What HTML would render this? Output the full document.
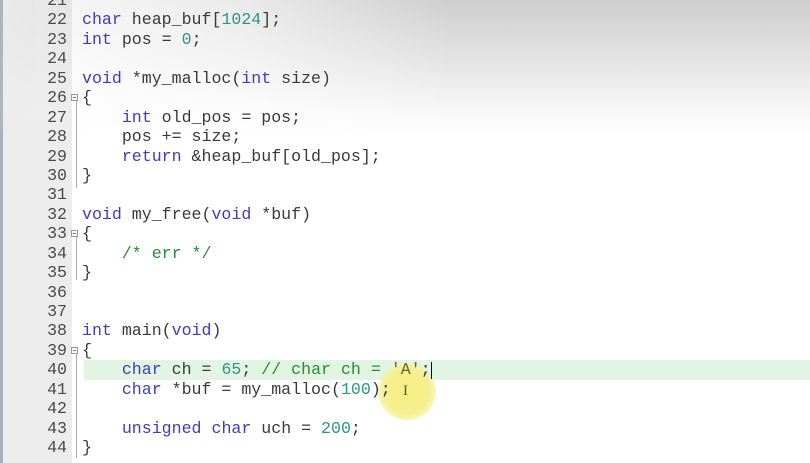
<!DOCTYPE html>
<html><head><meta charset="utf-8"><style>
html,body{margin:0;padding:0;width:810px;height:463px;overflow:hidden;background:#fff;}
.shade{position:absolute;left:0;top:0;width:810px;height:140px;background:linear-gradient(to bottom,#cecece 0%,#e2e2e2 40%,#f8f8f8 80%,rgba(255,255,255,0) 100%);-webkit-mask-image:linear-gradient(to right,rgba(0,0,0,0.1) 0px,rgba(0,0,0,0.45) 250px,#000 450px);mask-image:linear-gradient(to right,rgba(0,0,0,0.1) 0px,rgba(0,0,0,0.45) 250px,#000 450px);}
.strip{position:absolute;left:0;top:0;width:3px;height:463px;background:#a8b0bc;}
.gut{position:absolute;left:3px;top:0;width:69px;height:463px;background:#ececec;}
.hl{position:absolute;left:84px;top:360px;width:726px;height:20px;background:#e2f5e2;}
.code{position:absolute;left:0;top:-9px;font-family:"Liberation Mono",monospace;font-size:16.6px;line-height:19.45px;color:#3a3a3a;}
.l{position:relative;height:19.45px;white-space:pre;}
.n{position:absolute;left:0;width:67px;text-align:right;color:#4a4a4a;}
.t{position:absolute;left:82px;}
.k{color:#3c3cc4}.d{color:#2e9488}.c{color:#2a8a3a}.s{color:#6a6a1a}
.fb{position:absolute;left:71px;width:7px;height:7px;border:1px solid #999;box-sizing:border-box;background:#fff;}
.fb:after{content:"";position:absolute;left:1px;top:2px;width:3px;height:1px;background:#777;}
.vl{position:absolute;left:76px;width:1px;background:#aaa;}
.cur{position:absolute;left:431px;top:362px;width:1px;height:17px;background:#000;}
.glow{position:absolute;left:378px;top:364px;width:58px;height:56px;border-radius:50%;background:radial-gradient(circle,#f6ee80 0%,#f6ef90 55%,rgba(250,245,170,0.5) 80%,rgba(255,255,255,0) 100%);}
.ib{position:absolute;left:403px;top:383px;font-family:"Liberation Serif",serif;font-size:15px;color:#555;}
</style></head><body>
<div class="strip"></div><div class="gut"></div>
<div class="shade"></div>
<div class="hl"></div>
<div class="glow"></div>
<div class="vl" style="top:98px;height:90px"></div>
<div class="vl" style="top:236px;height:44px"></div>
<div class="vl" style="top:353px;height:105px"></div>
<div class="code">
<div class="l"><span class="n">21</span></div>
<div class="l"><span class="n">22</span><span class="t"><span class="k">char</span> heap_buf[<span class="d">1024</span>];</span></div>
<div class="l"><span class="n">23</span><span class="t"><span class="k">int</span> pos = <span class="d">0</span>;</span></div>
<div class="l"><span class="n">24</span></div>
<div class="l"><span class="n">25</span><span class="t"><span class="k">void</span> *my_malloc(<span class="k">int</span> size)</span></div>
<div class="l"><span class="n">26</span><span class="fb" style="top:6px"></span><span class="t">{</span></div>
<div class="l"><span class="n">27</span><span class="t">    <span class="k">int</span> old_pos = pos;</span></div>
<div class="l"><span class="n">28</span><span class="t">    pos += size;</span></div>
<div class="l"><span class="n">29</span><span class="t">    <span class="k">return</span> &amp;heap_buf[old_pos];</span></div>
<div class="l"><span class="n">30</span><span class="t">}</span></div>
<div class="l"><span class="n">31</span></div>
<div class="l"><span class="n">32</span><span class="t"><span class="k">void</span> my_free(<span class="k">void</span> *buf)</span></div>
<div class="l"><span class="n">33</span><span class="fb" style="top:6px"></span><span class="t">{</span></div>
<div class="l"><span class="n">34</span><span class="t">    <span class="c">/* err */</span></span></div>
<div class="l"><span class="n">35</span><span class="t">}</span></div>
<div class="l"><span class="n">36</span></div>
<div class="l"><span class="n">37</span></div>
<div class="l"><span class="n">38</span><span class="t"><span class="k">int</span> main(<span class="k">void</span>)</span></div>
<div class="l"><span class="n">39</span><span class="fb" style="top:6px"></span><span class="t">{</span></div>
<div class="l"><span class="n">40</span><span class="t">    <span class="k">char</span> ch = <span class="d">65</span>; <span class="c">// char ch = </span><span class="s">'A'</span>;</span></div>
<div class="l"><span class="n">41</span><span class="t">    <span class="k">char</span> *buf = my_malloc(<span class="d">100</span>);</span></div>
<div class="l"><span class="n">42</span></div>
<div class="l"><span class="n">43</span><span class="t">    <span class="k">unsigned</span> <span class="k">char</span> uch = <span class="d">200</span>;</span></div>
<div class="l"><span class="n">44</span><span class="t">}</span></div>
</div>
<div class="cur"></div>
<div class="ib">I</div>
</body></html>
